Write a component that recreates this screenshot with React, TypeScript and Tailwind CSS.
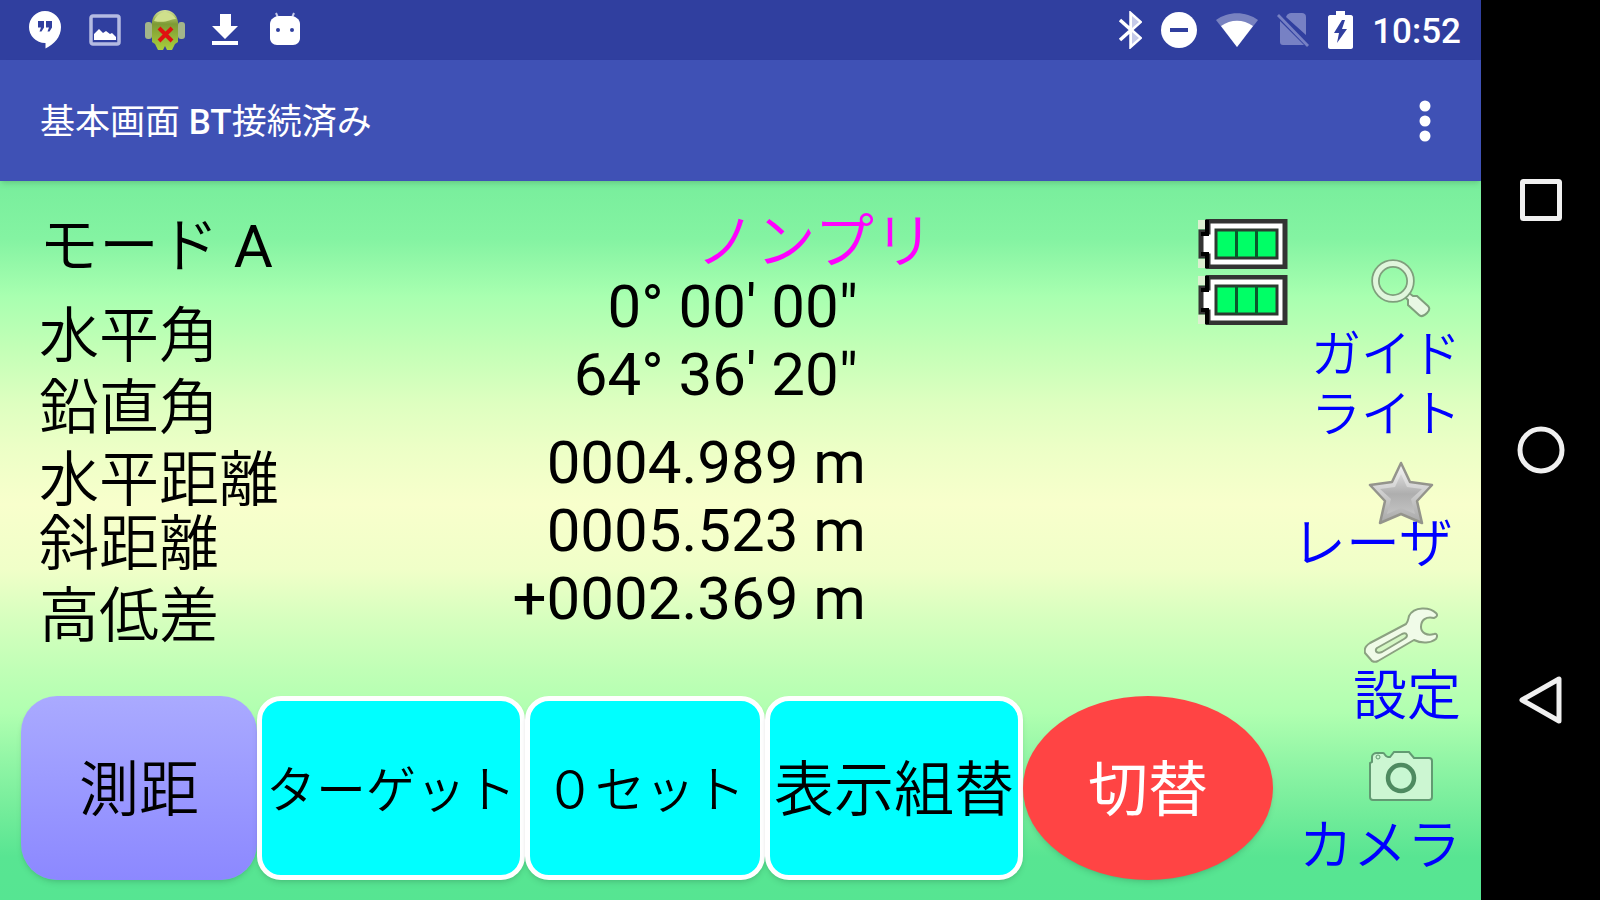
import type { ReactNode } from "react";

const angles = ["0° 00' 00\"", "64° 36' 20\""];
const distances = ["0004.989 m", "0005.523 m", "+0002.369 m"];

function HangoutsIcon() {
    return (
        <svg viewBox="0 0 32 38" className="h-[38px] w-8" fill="#fff">
            <path d="M16 0a16 16 0 1 0 0 32h.5v5.500C25 33.500 32 26 32 16A16 16 0 0 0 16 0z" />
            <path d="M9 10h6v6.500l-2.500 4h-2l1.500-4H9zM17 10h6v6.500l-2.500 4h-2l1.500-4h-3z" fill="#303f9f" />
        </svg>
    );
}

function PictureIcon() {
    return (
        <svg viewBox="0 0 32 32" className="h-8 w-8">
            <rect x="2" y="2" width="28" height="28" rx="2" fill="none" stroke="#b4bbe2" strokeWidth="3.500" />
            <path d="M5 26v-6l5-5 4 4 3-2 4 3 2-1 4 4v3z" fill="#fff" />
        </svg>
    );
}

function DebugIcon() {
    return (
        <svg viewBox="0 0 40 40" className="h-10 w-10">
            <defs>
                <linearGradient id="droid" x1="0" y1="0" x2="0" y2="1">
                    <stop offset="0" stopColor="#d5e39a" />
                    <stop offset="0.350" stopColor="#7d9a34" />
                    <stop offset="1" stopColor="#a9cf3c" />
                </linearGradient>
            </defs>
            <rect x="0" y="12" width="7" height="17" rx="3" fill="#a3b58a" />
            <rect x="33" y="12" width="7" height="17" rx="3" fill="#a3b58a" />
            <path d="M7 12C8 4 14 0 20 0s12 4 13 12v20l-3 2-3 6h-5l-2-4-2 4h-5l-3-6-3-2z" fill="url(#droid)" />
            <path d="M9 11c3-7 8-9 11-9s8 2 11 7c-5-1-9 5-22 2z" fill="#cfe08c" />
            <path d="M14 18l13 13M27 18L14 31" stroke="#e01010" strokeWidth="4" />
        </svg>
    );
}

function DownloadIcon() {
    return (
        <svg viewBox="0 0 26 32" className="h-8 w-[26px]" fill="#fff">
            <path d="M8 0h11v12h7L13 25 0 12h8z" />
            <path d="M0 27h26v4H0z" />
        </svg>
    );
}

function DroidHeadIcon() {
    return (
        <svg viewBox="0 0 32 36" className="h-9 w-8">
            <path d="M7 1l3 7M25 1l-3 7" stroke="#c5cae9" strokeWidth="2" />
            <path d="M1 12c0-5 5-8 9-8h12c4 0 9 3 9 8v14c0 4-3 7-7 7H8c-4 0-7-3-7-7z" fill="#fff" />
            <circle cx="9" cy="18" r="2" fill="#303f9f" />
            <circle cx="23" cy="18" r="2" fill="#303f9f" />
        </svg>
    );
}

function BluetoothIcon() {
    return (
        <svg viewBox="0 0 24 38" className="h-[38px] w-6" fill="none" stroke="#fff" strokeWidth="3.500">
            <path d="M2 9l20 18-9 8V3l9 8L2 29" />
            <path d="M14 5l7 6-7 6zM14 21l7 6-7 6z" fill="#c5cae9" stroke="none" />
        </svg>
    );
}

function DoNotDisturbIcon() {
    return (
        <svg viewBox="0 0 36 36" className="h-9 w-9">
            <circle cx="18" cy="18" r="18" fill="#fff" />
            <rect x="9" y="16" width="18" height="4" fill="#303f9f" />
        </svg>
    );
}

function WifiIcon() {
    return (
        <svg viewBox="0 0 42 34" className="h-[34px] w-[42px]">
            <path d="M0 7C12-2 30-2 42 7L21 34z" fill="#fff" opacity="0.350" />
            <path d="M5 13c10-7 22-7 32 0L21 34z" fill="#fff" />
        </svg>
    );
}

function NoSimIcon() {
    return (
        <svg viewBox="0 0 32 34" className="h-[34px] w-8" fill="#7781c4">
            <path d="M10 2c1-1 2-2 4-2h11c2 0 4 1 4 4v18L9 4zM3 8l24 24H6c-2 0-3-1-3-3z" />
            <path d="M0 3l2-2 30 31-2 2z" />
        </svg>
    );
}

function ChargingIcon() {
    return (
        <svg viewBox="0 0 25 38" className="h-[38px] w-[25px]">
            <path d="M8 0h9v4h6c1 0 2 1 2 2v30c0 1-1 2-2 2H2c-1 0-2-1-2-2V6c0-1 1-2 2-2h6z" fill="#fff" />
            <path d="M14 9L6 22h5l-2 10 10-14h-5l3-9z" fill="#303f9f" />
        </svg>
    );
}

function MoreIcon() {
    return (
        <svg viewBox="0 0 12 42" className="h-[42px] w-3" fill="#fff">
            <circle cx="6" cy="6" r="5.500" />
            <circle cx="6" cy="21" r="5.500" />
            <circle cx="6" cy="36" r="5.500" />
        </svg>
    );
}

function BatteryLevel() {
    return (
        <svg viewBox="0 0 90 50" className="h-[50px] w-[90px]">
            <path d="M0 1h7v9H0zM0 40h7v9H0z" fill="#dcefd0" />
            <path d="M10 2h77v46H10V37H3V13h7z" fill="#fff" stroke="#333" strokeWidth="5" />
            <path d="M9 1v14H3M9 49V35H3" fill="none" stroke="#000" strokeWidth="4" />
            <rect x="18" y="11" width="61" height="28" fill="#00ff66" stroke="#2c3a30" strokeWidth="3" />
            <path d="M38.500 11v28M58.500 11v28" stroke="#0a5a2c" strokeWidth="3" />
        </svg>
    );
}

function SearchIcon() {
    return (
        <svg viewBox="0 0 60 60" className="h-[60px] w-[60px]">
            <path d="M34 38l4-4 4 3 4 0 11 10c2 2 2 4-1 7-3 3-6 4-8 2L37 46l0-5z" fill="#e8f8e4" stroke="#7f9f7c" strokeWidth="2" />
            <circle cx="22" cy="22" r="17.500" fill="none" stroke="#7f9f7c" strokeWidth="8.500" />
            <circle cx="22" cy="22" r="17.500" fill="none" stroke="#e0f6dc" strokeWidth="5" />
        </svg>
    );
}

function StarIcon() {
    return (
        <svg viewBox="0 0 66 64" className="h-16 w-[66px]">
            <defs>
                <linearGradient id="star" x1="0" y1="0" x2="0" y2="1">
                    <stop offset="0" stopColor="#f4f4f4" />
                    <stop offset="1" stopColor="#a8a8a8" />
                </linearGradient>
                <linearGradient id="starInner" x1="0" y1="0" x2="0" y2="1">
                    <stop offset="0" stopColor="#d8d8d8" />
                    <stop offset="0.500" stopColor="#aeaeae" />
                    <stop offset="1" stopColor="#c2c2c2" />
                </linearGradient>
            </defs>
            <path
                d="M33 2l9 19 22 3-15 16 5 22-21-9-21 9 5-22L2 24l22-3z"
                fill="url(#star)"
                stroke="#94948c"
                strokeWidth="2.500"
                strokeLinejoin="round"
            />
            <path d="M33 13l6 13 15 2-11 10 4 15-14-6-14 6 4-15-11-10 15-2z" fill="url(#starInner)" />
        </svg>
    );
}

function WrenchIcon() {
    return (
        <svg viewBox="0 0 74 56" className="h-14 w-[74px]" stroke="#8ba181" strokeWidth="2" strokeLinejoin="round">
            <path
                d="M72 6C66 0 50-1 45 9c-1 4-1 6-3 8L6 36c-5 3-6 6-5 10l7 8c2 1 4 1 6 0l36-21c8 4 17 3 22-1 2-3 1-6-2-5-7 2-13-1-13-7 0-7 5-11 13-9 3-1 4-3 2-5z"
                fill="#f0fbe8"
            />
            <path d="M13 41l25-14c5-2 7 2 2 5L18 45c-5 2-8-1-5-4z" fill="#d4f7c4" />
        </svg>
    );
}

function CameraIcon() {
    return (
        <svg viewBox="0 0 64 50" className="h-[50px] w-16" stroke="#629a72">
            <path
                d="M3 11V6c0-2 2-4 5-4h6c2 0 2 4 5 4h2l4-5h15l5 6h15c2 0 3 1 3 3v36c0 2-1 3-3 3H4c-2 0-3-1-3-3V12z"
                fill="#ccf6d2"
                strokeWidth="2"
            />
            <circle cx="32" cy="27" r="13" fill="#c8f7d2" stroke="#4e8a60" strokeWidth="4.500" />
            <circle cx="9" cy="6" r="2" fill="none" />
        </svg>
    );
}

function SideButton({ icon, className, children }: { icon: ReactNode; className: string; children: ReactNode }) {
    return (
        <button className="flex flex-col items-end text-right text-[#0000ff]">
            <span className="flex w-[120px] justify-center">{icon}</span>
            <span className={className}>{children}</span>
        </button>
    );
}

const cyanButton = "rounded-[24px] border-[5px] border-white bg-[#00ffff] pt-[6px] whitespace-nowrap shadow-md";

export default function App() {
    return (
        <div className="flex min-h-screen bg-black font-['Roboto','Noto_Sans_CJK_JP',sans-serif]">
            <div className="flex min-w-0 flex-1 flex-col">
                <div className="flex h-[60px] items-center justify-between bg-[#303f9f] pr-5 pl-[15px] text-white">
                    <div className="grid grid-cols-[repeat(5,60px)] items-center justify-items-center">
                        <HangoutsIcon />
                        <PictureIcon />
                        <DebugIcon />
                        <DownloadIcon />
                        <DroidHeadIcon />
                    </div>
                    <div className="flex items-center gap-[19px]">
                        <BluetoothIcon />
                        <DoNotDisturbIcon />
                        <WifiIcon />
                        <NoSimIcon />
                        <ChargingIcon />
                        <span className="pt-1 text-[35px] leading-10 font-medium">10:52</span>
                    </div>
                </div>

                <header className="z-10 flex h-[121px] items-center justify-between bg-[#3f51b5] pr-[50px] pl-10 text-white shadow-md">
                    <h1 className="pt-1 text-[35px] leading-10">
                        基本画面 <span className="font-medium">BT</span>接続済み
                    </h1>
                    <button aria-label="メニュー">
                        <MoreIcon />
                    </button>
                </header>

                <main className="flex flex-1 bg-[linear-gradient(#78ee9c_0%,#84f3a2_8%,#a8ffb0_16%,#c2ffb6_23%,#deffc0_31%,#ecffc6_37%,#f8ffcc_45%,#f0ffc8_54%,#d6ffbe_61%,#c0ffb6_68%,#b0ffb0_74%,#90f5a5_81%,#72ec9a_88%,#58e592_94%,#56e592_100%)]">
                    <div className="flex min-w-0 flex-1 flex-col justify-between pb-5 pl-[21px]">
                        <div className="flex items-start pl-[18px] text-[60px]">
                            <div className="flex flex-1 flex-col pt-[34px] leading-[64px] font-[350] whitespace-nowrap">
                                <p>
                                    モード <span className="font-normal">A</span>
                                </p>
                                <p className="mt-[26px]">水平角</p>
                                <p className="mt-2">鉛直角</p>
                                <p className="mt-2">水平距離</p>
                                <p>斜距離</p>
                                <p className="mt-2">高低差</p>
                            </div>
                            <div className="flex flex-col pt-8 text-right leading-[68px]">
                                <p className="leading-[60px] font-[350] text-[#ff00ff]">ノンプリ</p>
                                <div className="pr-[76px]">
                                    {angles.map((angle) => (
                                        <p key={angle}>{angle}</p>
                                    ))}
                                </div>
                                <div className="mt-5 pr-[68px]">
                                    {distances.map((distance) => (
                                        <p key={distance}>{distance}</p>
                                    ))}
                                </div>
                            </div>
                            <div className="ml-[264px] flex flex-col gap-[6px] pt-[38px]">
                                <BatteryLevel />
                                <BatteryLevel />
                            </div>
                        </div>

                        <div className="mr-[15px] grid h-[184px] grid-cols-[236fr_268fr_240fr_258fr_250fr] text-[60px] font-[350]">
                            <button className="rounded-[36px] bg-linear-to-b from-[#aaaaff] to-[#8c88ff] pt-[6px] shadow-md">測距</button>
                            <button className={`${cyanButton} text-[50px]`}>ターゲット</button>
                            <button className={`${cyanButton} text-[50px]`}>０セット</button>
                            <button className={cyanButton}>表示組替</button>
                            <button className="rounded-[50%] bg-[#ff4444] pt-[6px] font-normal text-white shadow-md">切替</button>
                        </div>
                    </div>

                    <aside className="flex w-[193px] flex-col items-end pt-[78px] pr-5 font-[350]">
                        <SideButton icon={<SearchIcon />} className="mt-[6px] text-[50px] leading-[60px]">
                            ガイド
                            <br />
                            ライト
                        </SideButton>
                        <div className="mt-4">
                            <SideButton icon={<StarIcon />} className="-mt-[10px] pr-2 text-[54px] leading-[60px]">
                                レーザ
                            </SideButton>
                        </div>
                        <div className="mt-8">
                            <SideButton icon={<WrenchIcon />} className="mt-1 text-[54px] leading-[60px]">
                                設定
                            </SideButton>
                        </div>
                        <div className="mt-6">
                            <SideButton icon={<CameraIcon />} className="mt-4 text-[54px] leading-[60px]">
                                カメラ
                            </SideButton>
                        </div>
                    </aside>
                </main>
            </div>

            <nav className="flex w-[119px] flex-col py-[75px]">
                <button aria-label="履歴" className="flex flex-1 items-center justify-center">
                    <svg viewBox="0 0 48 48" className="h-12 w-12" fill="none" stroke="#f0f0f0" strokeWidth="5">
                        <rect x="5.500" y="5.500" width="37" height="37" rx="1" />
                    </svg>
                </button>
                <button aria-label="ホーム" className="flex flex-1 items-center justify-center">
                    <svg viewBox="0 0 48 48" className="h-12 w-12" fill="none" stroke="#f0f0f0" strokeWidth="5">
                        <circle cx="24" cy="24" r="21" />
                    </svg>
                </button>
                <button aria-label="戻る" className="flex flex-1 items-center justify-center">
                    <svg viewBox="0 0 48 48" className="h-12 w-12" fill="none" stroke="#f0f0f0" strokeWidth="5" strokeLinejoin="round">
                        <path d="M42 3v42L5 24z" />
                    </svg>
                </button>
            </nav>
        </div>
    );
}
